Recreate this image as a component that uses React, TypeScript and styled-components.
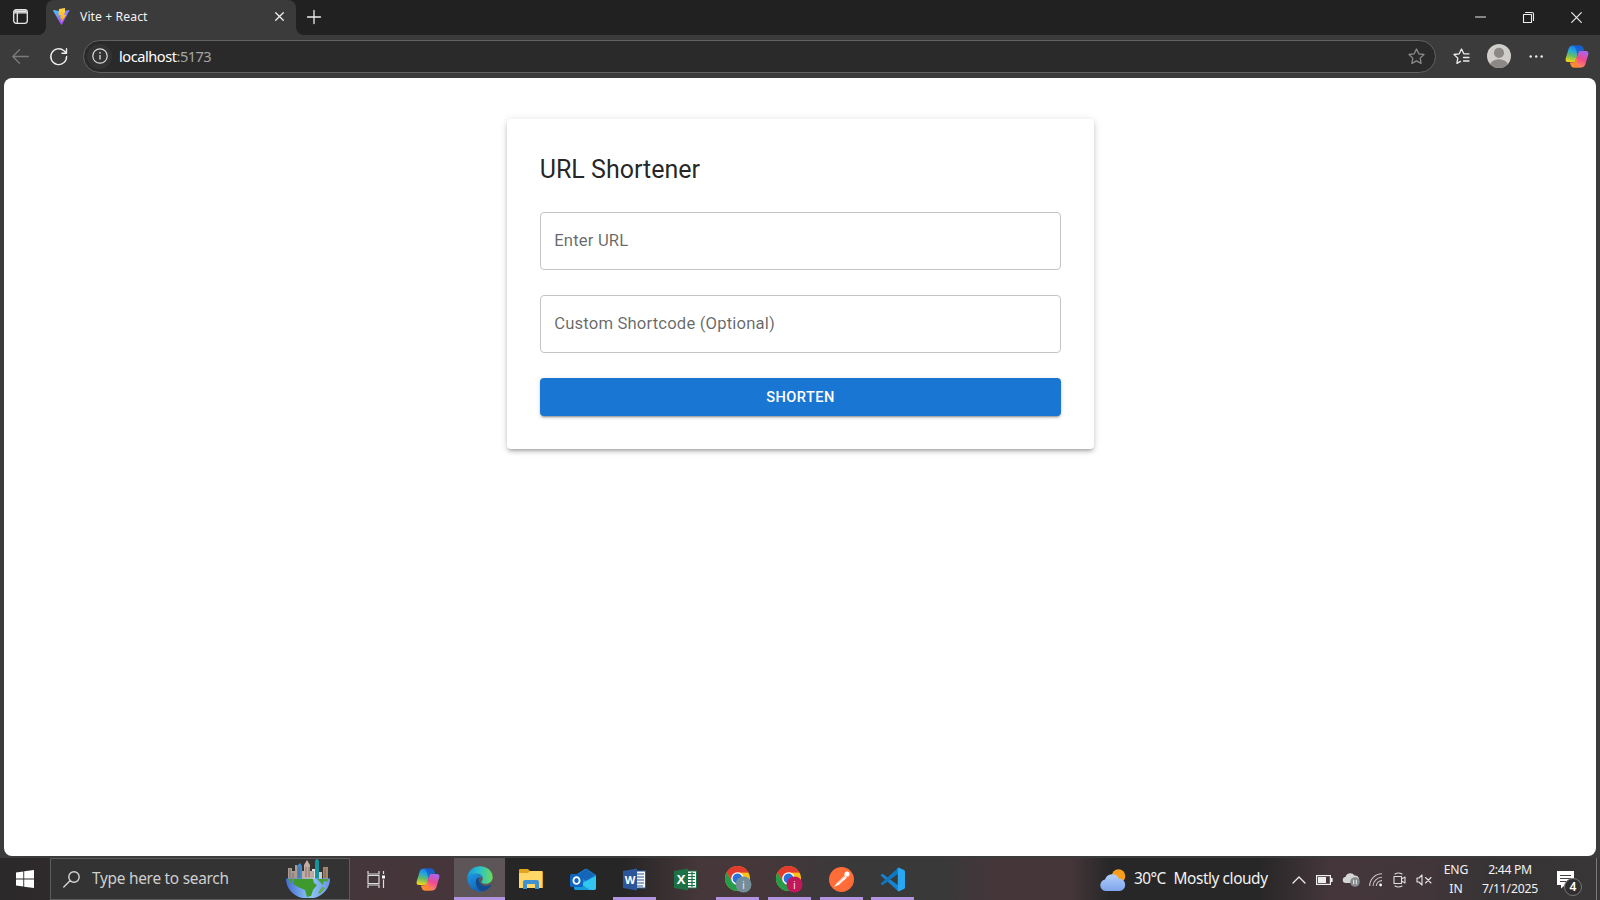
import React from 'react';
import styled, { createGlobalStyle } from 'styled-components';

const ui = `'Noto Sans', 'Open Sans', sans-serif`;

const GlobalStyle = createGlobalStyle`
  *, *::before, *::after { box-sizing: border-box; }
  body { margin: 0; background: #3b3b3b; overflow: hidden; font-family: ${ui}; }
  svg { display: block; flex: none; overflow: visible; }
`;

const Screen = styled.div`
  width: 1600px;
  height: 900px;
  display: flex;
  flex-direction: column;
  background: #3b3b3b;
`;

const TabStrip = styled.header`
  height: 35px;
  display: flex;
  background: #3b3b3b;
`;

const TabMenu = styled.div`
  width: 46px;
  display: flex;
  align-items: center;
  padding: 0 0 2px 13px;
  background: #212121;
  border-bottom-right-radius: 8px;
`;

const TabBack = styled.div`
  background: linear-gradient(#212121 50%, #3b3b3b 50%);
`;

const Tab = styled.div`
  width: 250px;
  height: 35px;
  display: flex;
  align-items: center;
  padding: 0 12px 2px 7px;
  background: #3b3b3b;
  border-radius: 8px 8px 0 0;
`;

const StripRest = styled.div`
  flex: 1;
  display: flex;
  align-items: center;
  padding: 0 18.5px 2px 11px;
  background: #212121;
  border-bottom-left-radius: 8px;
`;

const WindowButtons = styled.div`
  margin-left: auto;
  display: flex;
  align-items: center;
  gap: 37px;
  padding-top: 2px;
`;

const Label = styled.span<{ $size: number; $color?: string; $spacing?: number }>`
  font-size: ${p => p.$size}px;
  line-height: 1.3;
  letter-spacing: ${p => p.$spacing ?? 0}px;
  color: ${p => p.$color ?? '#f2f2f2'};
  white-space: pre;
`;

const TabTitle = styled(Label)`
  flex: 1;
  margin-left: 10px;
`;

const Toolbar = styled.nav`
  height: 43px;
  display: flex;
  align-items: center;
  padding: 0 11px 1px 12px;
`;

const Reload = styled.div`
  margin: 0 15.5px 0 20.5px;
`;

const AddressBar = styled.div`
  width: 1354px;
  height: 33px;
  display: flex;
  align-items: center;
  padding: 0 10px 0 3px;
  background: #2a2a2a;
  border: 1px solid #626262;
  border-radius: 17px;
`;

const SiteInfo = styled.div`
  width: 25px;
  height: 25px;
  display: grid;
  place-items: center;
  margin-right: 7px;
  background: #333;
  border-radius: 50%;
`;

const Address = styled.div`
  flex: 1;
  display: flex;
`;

const ToolbarActions = styled.div`
  flex: 1;
  display: flex;
  align-items: center;
  padding-left: 17px;
`;

const Avatar = styled.div`
  margin: 0 18px 0 17px;
`;

const Page = styled.main`
  height: 777.5px;
  margin: 0 4px;
  padding-top: 40.6px;
  display: flex;
  justify-content: center;
  align-items: flex-start;
  background: #fff;
  border-radius: 8px;
`;

const Card = styled.form`
  width: 587.5px;
  height: 330.5px;
  margin-left: 1px;
  display: flex;
  flex-direction: column;
  padding: 33.3px 33px;
  font-family: Roboto, sans-serif;
  border-radius: 4px;
  box-shadow: 0 3px 3px -2px rgba(0,0,0,.2), 0 3px 4px 0 rgba(0,0,0,.14), 0 1px 8px 0 rgba(0,0,0,.12);
`;

const Title = styled.h1`
  margin: 0 0 25.6px;
  padding-top: 1px;
  font-size: 25px;
  line-height: 33.3px;
  font-weight: 400;
  color: rgba(0,0,0,.87);
`;

const Field = styled.label`
  height: 58.3px;
  display: flex;
  align-items: center;
  padding: 0 13.5px;
  margin-bottom: 25px;
  border: 1px solid #c4c4c4;
  border-radius: 4px;
  font-size: 16.67px;
  letter-spacing: .156px;
  color: rgba(0,0,0,.6);
`;

const Submit = styled.button`
  height: 38px;
  border: 0;
  padding: 0;
  border-radius: 4px;
  background: #1976d2;
  color: #fff;
  font: 500 14.58px Roboto, sans-serif;
  letter-spacing: .42px;
  box-shadow: 0 3px 1px -2px rgba(0,0,0,.2), 0 2px 2px 0 rgba(0,0,0,.14), 0 1px 5px 0 rgba(0,0,0,.12);
`;

const Taskbar = styled.footer`
  height: 42px;
  margin-top: 2.5px;
  display: flex;
  background: linear-gradient(90deg, #2b292a 0, #2f2a2b 50px, #44363a 349px, #46363b 450px, #272626 507px, #272626 625px, #46373a 700px, #46373a 750px, #3a393a 850px, #39393a 940px, #45363a 1000px, #45363a 1070px, #282727 1110px, #282727 1260px, #44363a 1330px, #43363a 1420px, #353334 1500px, #383637 1600px);
`;

const StartButton = styled.div`
  width: 50px;
  display: grid;
  place-items: center;
`;

const SearchBox = styled.div`
  width: 299.5px;
  display: flex;
  align-items: center;
  padding: 0 19px 0 12px;
  background: #333;
  border: 1px solid #5c5c5c;
`;

const SearchText = styled(Label)`
  flex: 1;
  margin-left: 12px;
  padding-top: 1px;
`;

const Apps = styled.div`
  display: flex;
  padding-left: 1px;
`;

const Tile = styled.div<{ $active?: boolean; $running?: boolean }>`
  width: 51.65px;
  height: 42px;
  display: grid;
  place-items: center;
  background-color: ${p => (p.$active ? '#5d5557' : 'transparent')};
  background-image: ${p => (p.$active || p.$running ? 'linear-gradient(#b294e0, #b294e0)' : 'none')};
  background-repeat: no-repeat;
  background-position: bottom center;
  background-size: ${p => (p.$active ? '100%' : '43px')} 3px;
`;

const Weather = styled.div`
  display: flex;
  align-items: center;
  margin-left: auto;
  width: 192px;
  gap: 8px;
  padding-top: 1px;
`;

const Tray = styled.div`
  width: 140px;
  display: flex;
  align-items: center;
  justify-content: space-between;
  padding-top: 1px;
`;

const Stack = styled.div<{ $width: number }>`
  width: ${p => p.$width}px;
  display: flex;
  flex-direction: column;
  align-items: center;
  justify-content: center;
  gap: 2.5px;
  padding-top: 1px;
`;

const Notifications = styled.div`
  position: relative;
  width: 56px;
  padding: 13px 0 0 17px;
`;

const Count = styled.span`
  position: absolute;
  left: 24px;
  top: 20px;
  width: 18px;
  height: 18px;
  display: grid;
  place-items: center;
  border-radius: 50%;
  border: 1px solid #777;
  background: #302e2f;
  color: #fff;
  font-size: 12px;
  font-weight: 600;
  line-height: 1;
`;

const ShowDesktop = styled.div`
  width: 4px;
  border-left: 1px solid #7b7879;
`;

const Line = ({ w, h, d, color = '#ededed', sw = 1.3 }: { w: number; h: number; d: string; color?: string; sw?: number }) => (
  <svg width={w} height={h} viewBox={`0 0 ${w} ${h}`} fill="none" stroke={color} strokeWidth={sw} strokeLinecap="round" strokeLinejoin="round">
    <path d={d} />
  </svg>
);

const STAR = 'M8.5 1L10.8 5.8L16 6.5L12.2 10.1L13.1 15.4L8.5 12.9L3.9 15.4L4.8 10.1L1 6.5L6.2 5.8Z';

const ViteLogo = () => (
  <svg width="17" height="17" viewBox="0 0 34 34">
    <defs>
      <linearGradient id="va" x1="0" y1="0" x2=".7" y2="1"><stop stopColor="#41d1ff" /><stop offset="1" stopColor="#bd34fe" /></linearGradient>
      <linearGradient id="vb" x1="0" y1="0" x2="0" y2="1"><stop stopColor="#ffd84a" /><stop offset="1" stopColor="#ffa800" /></linearGradient>
    </defs>
    <path d="M33 5L18 33Q17 34 16 33L0 5Q0 4 1 4L17 7L32 4Q33 4 33 5Z" fill="url(#va)" />
    <path d="M24 0L12 2L11 15L16 14L14 21L18 20L16 29L27 13L22 14L24 8Z" fill="url(#vb)" />
  </svg>
);

const Copilot = ({ id }: { id: string }) => (
  <svg width="24" height="23" viewBox="0 0 24 23">
    <defs>
      <linearGradient id={id + 'a'} x1=".6" y1="0" x2=".3" y2="1"><stop stopColor="#1b72e8" /><stop offset=".35" stopColor="#23a6df" /><stop offset=".65" stopColor="#65bd65" /><stop offset="1" stopColor="#f3d719" /></linearGradient>
      <linearGradient id={id + 'b'} x1=".7" y1="0" x2=".3" y2="1"><stop stopColor="#a765ed" /><stop offset=".45" stopColor="#ef4a91" /><stop offset="1" stopColor="#ff9558" /></linearGradient>
    </defs>
    <path d="M8 .5H15Q17.5 .5 18.2 3L19 5.5H16Q14 5.5 13 8.5L10.3 17H3Q0 17 .7 13.5L3.7 3.5Q4.7 .5 8 .5Z" fill={`url(#${id}a)`} />
    <path d="M16 22.5H9Q6.5 22.5 5.8 20L5 17.5H8Q10 17.5 11 14.5L13.7 6H21Q24 6 23.3 9.5L20.3 19.5Q19.3 22.5 16 22.5Z" fill={`url(#${id}b)`} />
    <path d="M10 .5H15Q17.5 .5 18.2 3L19 5.5H16Q14 5.5 13 8.5L12.2 11Q11.5 3 8.5 .5Z" fill="#1649bd" opacity=".6" />
    <path d="M14 22.5H9Q6.5 22.5 5.8 20L5 17.5H8Q10 17.5 11 14.5L11.8 12Q12.5 20 15.5 22.5Z" fill="#ff8a28" opacity=".75" />
  </svg>
);

const Edge = () => (
  <svg width="26" height="26" viewBox="0 0 26 26">
    <defs>
      <linearGradient id="ea" x1="0" y1=".4" x2="1" y2=".4"><stop stopColor="#1799df" /><stop offset=".5" stopColor="#2bc3c9" /><stop offset="1" stopColor="#6ddc55" /></linearGradient>
      <linearGradient id="eb" x1="0" y1="0" x2=".5" y2="1"><stop stopColor="#1d9be3" /><stop offset="1" stopColor="#1463ba" /></linearGradient>
    </defs>
    <path d="M0.3 11C1.5 4 7 .3 13 .3C20.5 .3 25.7 5.4 25.7 11.2C25.7 15.2 22.5 17.8 18.7 17.8C16 17.8 14.4 16.8 14.4 15.9C14.4 15 15.8 14.7 15.8 12.5C15.8 9.5 13 7.7 9.5 7.7C5.5 7.7 2.2 9.5 .3 11Z" fill="url(#ea)" />
    <path d="M.3 11C2.2 8.8 5.5 7.7 8.8 7.7C13 7.7 15.4 10 15.4 12.2C12 10 8.8 12.5 8.8 16C8.8 21 12.5 25 16.5 25.2C8 27.6 0 21 .3 11Z" fill="url(#eb)" />
    <path d="M8.8 16Q9 12.4 12 11.5C10.7 15.5 14 20 19 20Q21.5 20 23.6 18.8Q24.8 18.4 24.1 19.5Q21.5 23.8 16.5 25.2C12 25 8.8 21 8.8 16Z" fill="#114c91" />
  </svg>
);

const Explorer = () => (
  <svg width="24" height="22" viewBox="0 0 24 22">
    <path d="M0 2Q0 1 1 1H9L11 3H23Q24 3 24 4V20H0Z" fill="#e5a41b" />
    <path d="M0 5H9L11 3H23V20H0Z" fill="#ffd766" />
    <path d="M4 21V14Q4 12 6 12H18Q20 12 20 14V21H16V16H8V21Z" fill="#3f91cf" />
  </svg>
);

const Outlook = () => (
  <svg width="26" height="23" viewBox="0 0 26 23">
    <path d="M4 8L15 1Q16 .4 17 1L26 7V20Q26 22 24 22H6Q4 22 4 20Z" fill="#1490df" />
    <path d="M7 7L16 1L25 7L16 13Z" fill="#1665b6" />
    <path d="M26 8V20Q26 22 24 22H7L14 14Z" fill="#32c5f0" />
    <path d="M5 12L20 22H6Q4 22 4 20Z" fill="#179bd9" />
    <rect y="6" width="13" height="13" rx="1.5" fill="#0f66bf" />
    <ellipse cx="6.5" cy="12.5" rx="3.1" ry="3.4" fill="none" stroke="#fff" strokeWidth="1.8" />
  </svg>
);

const Office = ({ letter, color, sheet }: { letter: string; color: string; sheet?: boolean }) => (
  <svg width="24" height="23" viewBox="0 0 24 23">
    <rect x="12" y="3" width="10.5" height="17" fill="#f6f8fa" stroke={color} />
    <path d={sheet ? 'M14 5.5H21M14 8.5H21M14 11.5H21M14 14.5H21M14 17.5H21M18 4V19' : 'M14 6H21M14 9H21M14 12H21M14 15H21M14 18H20'} stroke={color} strokeWidth="1.2" />
    <path d="M0 3L14 .5V22.5L0 20Z" fill={color} />
    <text x="7" y="16" textAnchor="middle" fill="#fff" fontFamily="Open Sans, sans-serif" fontWeight="700" fontSize={sheet ? 13 : 11}>{letter}</text>
  </svg>
);

const Chrome = ({ badge }: { badge: string }) => (
  <svg width="26" height="26" viewBox="0 0 26 26">
    <circle cx="12.5" cy="12.5" r="12.5" fill="#fbc116" />
    <path d="M12.5 12.5L1.7 6.2A12.5 12.5 0 0 1 23.3 6.2H12.5Z" fill="#e33b2e" />
    <path d="M1.7 6.2A12.5 12.5 0 0 0 12.5 25L18 15.6L12.5 18.5L7 15.5Z" fill="#269b49" />
    <path d="M1.7 6.2L7 15.5L12.5 6.5H23.3A12.5 12.5 0 0 0 1.7 6.2Z" fill="#e33b2e" />
    <circle cx="12.5" cy="12.5" r="6.3" fill="#fff" />
    <circle cx="12.5" cy="12.5" r="4.9" fill="#2871df" />
    <circle cx="18.5" cy="18.5" r="8" fill={badge} />
    <text x="18.5" y="22.5" textAnchor="middle" fill="#f2dce6" fontFamily="Noto Sans, sans-serif" fontSize="11">i</text>
  </svg>
);

const Postman = () => (
  <svg width="25" height="25" viewBox="0 0 25 25">
    <circle cx="12.5" cy="12.5" r="12.5" fill="#ff6c37" />
    <path d="M5 20L8 16L15.5 8.5L18 10.5L10.5 17.5Z" fill="#fff" />
    <path d="M9 15.5L16 9M10.5 17L14 13.5" stroke="#ff8c62" strokeWidth=".7" />
    <circle cx="18" cy="7" r="2.6" fill="#fff" />
  </svg>
);

const VsCode = () => (
  <svg width="25" height="25" viewBox="0 0 25 25">
    <path d="M.5 8.3L2.5 6.8L18.5 18.5V24.5Z" fill="#1684cf" />
    <path d="M.5 16.7L2.5 18.2L18.5 6.5V.5Z" fill="#0d78bf" />
    <path d="M18.5 .5L24 3Q25 3.5 25 5V20Q25 21.5 24 22L18.5 24.5L17.8 23.8V1.2Z" fill="#2aa7f2" />
  </svg>
);

const Globe = () => (
  <svg width="44" height="40" viewBox="0 0 44 40">
    <defs><linearGradient id="sea"><stop stopColor="#456bd2" /><stop offset=".55" stopColor="#8fc7f7" /><stop offset="1" stopColor="#6a94e8" /></linearGradient></defs>
    <path d="M2 20V9H6V12H9V6H11V20Z" fill="#a99b91" />
    <path d="M11 20V7L14 4L16 7V20Z" fill="#3f8bd0" />
    <path d="M16 20V12H18V6L21 1L24 6V12H27V20Z" fill="#c5aa9e" />
    <path d="M26 20V10H30V20Z" fill="#e5ded6" />
    <path d="M29 20V2Q31 -2 33 2V20Z" fill="#16939d" />
    <path d="M37 20V8H42V20Z" fill="#a78368" />
    <path d="M33 20V13H36V20Z" fill="#d4c9c3" />
    <path d="M4 10V19M7 14V19M20 8V18M23 8V18M39 10V19M13 8V19M27 12V19" stroke="#6a5f63" strokeWidth=".8" />
    <path d="M0 19.5H44A22 20 0 0 1 28 39H16A22 20 0 0 1 0 19.5Z" fill="url(#sea)" />
    <path d="M8 20H27L28 24L31 26L27 31L25 37L21 38L19 31L12 28L7 25Z" fill="#3f9a2d" />
    <path d="M2 20H7L5 25ZM31 20H42L41 23L38 22L37 26L34 23Z" fill="#45a034" />
    <path d="M36 28L39 29L34 35L32 34Z" fill="#65ad45" />
  </svg>
);

const WeatherIcon = () => (
  <svg width="26" height="22" viewBox="0 0 26 22">
    <defs><linearGradient id="cl" x1="0" y1="0" x2="0" y2="1"><stop stopColor="#b4d0fa" /><stop offset="1" stopColor="#7da5ec" /></linearGradient></defs>
    <circle cx="18.5" cy="7" r="6.8" fill="#f99d1c" />
    <path d="M6 22A5.8 5.8 0 0 1 5 10.5A7.5 7.5 0 0 1 19 9.5A6.3 6.3 0 0 1 20 22Z" fill="url(#cl)" />
  </svg>
);

const TrayIcons = () => (
  <Tray>
    <Line w={14} h={8} d="M1 7L7 1L13 7" />
    <svg width="17" height="10" viewBox="0 0 17 10"><rect x=".6" y=".6" width="13.8" height="8.8" fill="none" stroke="#eee" strokeWidth="1.2" /><path d="M2 2H10V8H2ZM15 3H16.6V7H15Z" fill="#eee" /></svg>
    <svg width="17" height="15" viewBox="0 0 17 15"><path d="M3 11A3 3 0 0 1 2.5 5A5 5 0 0 1 11.5 3.5A4 4 0 0 1 14 11Z" fill="#d5d5d5" /><circle cx="12" cy="10" r="4.8" fill="#85898c" /><path d="M10.7 7.8V12.3M13.3 7.8V12.3" stroke="#eee" /></svg>
    <svg width="14" height="14" viewBox="0 0 14 14" fill="none" stroke="#c9c5c6" strokeWidth="1.1"><path d="M.7 13A12.3 12.3 0 0 1 13 .7M4 13A9 9 0 0 1 13 4.3M7.3 13A5.7 5.7 0 0 1 13 7.6" /><circle cx="11.6" cy="12" r="1.4" fill="#fff" stroke="none" /></svg>
    <Line w={13} h={16} sw={1.1} color="#ddd" d="M2 2Q5.5 0 9 2M2 14Q5.5 16 9 14M1 4.5H8.5V11.5H1ZM8.5 7L12 5V11L8.5 9" />
    <Line w={16} h={12} sw={1.1} color="#e5e5e5" d="M1 4H3L6 1V11L3 8H1ZM9.5 3.5L15 9M15 3.5L9.5 9" />
  </Tray>
);

const TaskView = () => (
  <svg width="18" height="17" viewBox="0 0 18 17" fill="none" stroke="#ddd" strokeWidth="1.2">
    <path d="M1 0V3H12V0M1 17V14H12V17M1 4.5H12V12.5H1ZM16.5 0V3M16.5 8.5V17" /><rect x="15" y="4.5" width="3" height="3" fill="#fff" stroke="none" />
  </svg>
);

export default function App() {
  return (
    <Screen>
      <GlobalStyle />
      <TabStrip>
        <TabMenu>
          <svg width="15" height="15" viewBox="0 0 15 15" fill="none" stroke="#e8e8e8" strokeWidth="1.3"><rect x=".7" y=".7" width="13.6" height="13.6" rx="2.5" /><path d="M1 3.8H14M4.3 4V14" /><path d="M1.5 2.3H13.5" strokeWidth="2" /></svg>
        </TabMenu>
        <TabBack>
          <Tab>
            <ViteLogo />
            <TabTitle $size={12.2} $spacing={0.08}>Vite + React</TabTitle>
            <Line w={9} h={9} d="M.7 .7L8.3 8.3M8.3 .7L.7 8.3" />
          </Tab>
        </TabBack>
        <StripRest>
          <Line w={14} h={14} d="M7 .5V13.5M.5 7H13.5" />
          <WindowButtons>
            <Line w={11} h={11} sw={1} d="M.5 5H10.5" />
            <Line w={11} h={11} sw={1.1} d="M.5 2.5H8.5V10.5H.5ZM2.5 .5H9Q10.5 .5 10.5 2V8.5" />
            <Line w={11} h={11} sw={1.2} d="M.7 .7L10.3 10.3M10.3 .7L.7 10.3" />
          </WindowButtons>
        </StripRest>
      </TabStrip>
      <Toolbar>
        <Line w={17} h={15} color="#7c7c7c" d="M16.3 7.5H1M7.5 .8L.8 7.5L7.5 14.2" />
        <Reload><Line w={18} h={17} sw={1.4} d="M16.6 8.5A7.9 7.9 0 1 1 14 2.8L16.5 5M16.5 .7V5.2H12" /></Reload>
        <AddressBar>
          <SiteInfo>
            <svg width="16" height="16" viewBox="0 0 16 16"><circle cx="8" cy="8" r="7.2" fill="none" stroke="#ddd" strokeWidth="1.2" /><path d="M8 7V11.5" stroke="#ddd" strokeWidth="1.3" /><circle cx="8" cy="4.8" r=".9" fill="#ddd" /></svg>
          </SiteInfo>
          <Address>
            <Label $size={14.6} $spacing={-0.45} $color="#fff">localhost</Label>
            <Label $size={14.6} $spacing={-0.6} $color="#a5a5a5">:5173</Label>
          </Address>
          <Line w={17} h={16} color="#8a8a8a" d={STAR} />
        </AddressBar>
        <ToolbarActions>
          <Line w={17} h={16} d="M16 5.8H10.8L8.5 1L6.2 5.8L1 6.5L4.8 10.1L3.9 15.4L7.5 13.4M10.5 9.5H16M10.5 13H16" />
          <Avatar>
            <svg width="24" height="24" viewBox="0 0 24 24"><clipPath id="face"><circle cx="12" cy="12" r="12" /></clipPath><g clipPath="url(#face)"><rect width="24" height="24" fill="#d0cecb" /><circle cx="12" cy="8.8" r="5.1" fill="#8b8885" /><ellipse cx="12" cy="21" rx="8.8" ry="5.8" fill="#8b8885" /></g></svg>
          </Avatar>
          <svg width="36" height="3" viewBox="0 0 36 3" fill="#eee"><circle cx="1.7" cy="1.5" r="1.2" /><circle cx="7.2" cy="1.5" r="1.2" /><circle cx="12.7" cy="1.5" r="1.2" /></svg>
          <Copilot id="top" />
        </ToolbarActions>
      </Toolbar>
      <Page>
        <Card>
          <Title>URL Shortener</Title>
          <Field>Enter URL</Field>
          <Field>Custom Shortcode (Optional)</Field>
          <Submit type="button">SHORTEN</Submit>
        </Card>
      </Page>
      <Taskbar>
        <StartButton>
          <svg width="18" height="18" viewBox="0 0 18 18" fill="#fff"><path d="M0 2.5L7.3 1.4V8.5H0ZM8.2 1.3L18 0V8.5H8.2ZM0 9.4H7.3V16.5L0 15.5ZM8.2 9.4H18V18L8.2 16.7Z" /></svg>
        </StartButton>
        <SearchBox>
          <Line w={17} h={17} sw={1.4} color="#d5d5d5" d="M16.2 6A5.2 5.2 0 1 1 5.8 6A5.2 5.2 0 1 1 16.2 6M7 9.7L.8 16" />
          <SearchText $size={15.4} $spacing={-0.26} $color="#cfcfcf">Type here to search</SearchText>
          <Globe />
        </SearchBox>
        <Apps>
          <Tile><TaskView /></Tile>
          <Tile><Copilot id="bar" /></Tile>
          <Tile $active><Edge /></Tile>
          <Tile><Explorer /></Tile>
          <Tile><Outlook /></Tile>
          <Tile $running><Office letter="W" color="#2b579a" /></Tile>
          <Tile><Office letter="X" color="#1e7145" sheet /></Tile>
          <Tile $running><Chrome badge="#748e99" /></Tile>
          <Tile $running><Chrome badge="#c2185b" /></Tile>
          <Tile $running><Postman /></Tile>
          <Tile $running><VsCode /></Tile>
        </Apps>
        <Weather>
          <WeatherIcon />
          <Label $size={15.4} $spacing={-0.6}>30°C</Label>
          <Label $size={15.4} $spacing={-0.42}>Mostly cloudy</Label>
        </Weather>
        <TrayIcons />
        <Stack $width={48}>
          <Label $size={12.2} $spacing={-0.1}>ENG</Label>
          <Label $size={12.2}>IN</Label>
        </Stack>
        <Stack $width={60}>
          <Label $size={12.2} $spacing={-0.3}>2:44 PM</Label>
          <Label $size={12.2} $spacing={-0.2}>7/11/2025</Label>
        </Stack>
        <Notifications>
          <svg width="17" height="18" viewBox="0 0 17 18"><path d="M0 0H17V14H8L4 17.5V14H0Z" fill="#fff" /><path d="M3 4.5H14M3 7.5H14M3 10.5H9" stroke="#444" strokeWidth="1.1" /></svg>
          <Count>4</Count>
        </Notifications>
        <ShowDesktop />
      </Taskbar>
    </Screen>
  );
}
